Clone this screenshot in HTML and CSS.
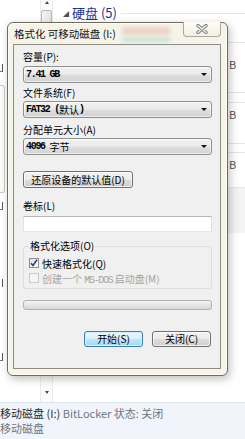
FILE: index.html
```html
<!DOCTYPE html>
<html lang="zh-CN">
  <head>
    <meta charset="UTF-8" />
    <meta name="viewport" content="width=device-width, initial-scale=1.0" />
    <title>格式化 可移动磁盘 (I:)</title>
    <link rel="stylesheet" href="styles.css">
  </head>

  <body>
    <!-- explorer window behind the dialog -->
    <div class="explorer">
      <div class="main">
        <div class="nav">
          <span class="nav-mark mark-1"></span>
          <div class="nav-box"></div>
          <span class="nav-mark mark-2"></span>
          <span class="nav-mark mark-3"></span>
          <span class="nav-mark mark-4"></span>
        </div>
        <div class="scroll">
          <span class="arrow arrow-up"></span>
          <div class="thumb"></div>
          <span class="arrow arrow-down"></span>
        </div>
        <div class="files">
          <div class="group-head">
            <span class="tri">◢</span>
            <span class="group-name">硬盘 (5)</span>
            <span class="group-line"></span>
          </div>
          <div class="tiles">
            <div class="tiles-main"></div>
            <div class="tiles-edge">
              <div class="tile tile-1"><span>B</span></div>
              <div class="tile tile-2"><span>B</span></div>
              <div class="tile tile-3"><span>B</span></div>
              <div class="tile-gray"></div>
            </div>
          </div>
        </div>
      </div>
      <div class="details">
        <div class="details-text">
          <div><span class="drive-name">移动磁盘 (I:)</span> <span class="dim">BitLocker 状态: 关闭</span></div>
          <div class="dim">移动磁盘</div>
        </div>
      </div>
    </div>

    <!-- format dialog -->
    <div class="dialog">
      <div class="title-bar">
        <span class="title">格式化 可移动磁盘 (I:)</span>
        <span class="glass"></span>
      </div>
      <div class="close-btn">
        <svg width="12" height="10" viewBox="0 0 12 10">
          <path d="M2 1.5 L10 8.5 M10 1.5 L2 8.5" stroke="#7d7d7d" stroke-width="3.4" stroke-linecap="round" fill="none" />
          <path d="M2 1.5 L10 8.5 M10 1.5 L2 8.5" stroke="#f2f2f2" stroke-width="1.5" stroke-linecap="round" fill="none" />
        </svg>
      </div>

      <div class="client">
        <div class="lbl">容量(P):</div>
        <div class="combo combo-first">
          <span class="mono">7.41 GB</span>
          <span class="caret"></span>
        </div>

        <div class="lbl lbl-fs">文件系统(F)</div>
        <div class="combo">
          <span class="mono">FAT32 (</span><span>默认</span><span class="mono">)</span>
          <span class="caret"></span>
        </div>

        <div class="lbl lbl-unit">分配单元大小(A)</div>
        <div class="combo">
          <span class="mono">4096 </span><span>字节</span>
          <span class="caret"></span>
        </div>

        <div class="btn reset">还原设备的默认值(D)</div>

        <div class="lbl lbl-volume">卷标(L)</div>
        <div class="volume-input"></div>

        <fieldset class="options">
          <legend>格式化选项(O)</legend>
          <div class="check-row">
            <span class="box">
              <svg width="8" height="8" viewBox="0 0 8 8">
                <path d="M1 4.2 L3 6.5 L7 0.8" stroke="#2c3f85" stroke-width="1.6" fill="none" />
              </svg>
            </span>
            <span>快速格式化(Q)</span>
          </div>
          <div class="check-row disabled">
            <span class="box"></span>
            <span>创建一个 <span class="mono">MS-DOS</span> 启动盘(M)</span>
          </div>
        </fieldset>

        <div class="progress"></div>

        <div class="actions">
          <div class="btn action default">开始(S)</div>
          <div class="btn action">关闭(C)</div>
        </div>
      </div>
    </div>
  </body>
</html>
```

FILE: styles.css
```css
body {
  margin: 0;
  width: 245px;
  height: 439px;
  overflow: hidden;
  position: relative;
  background-color: #ffffff;
  font-family: "Noto Sans CJK SC", "Noto Sans", sans-serif;
}

/* explorer behind */

.explorer {
  display: flex;
  flex-direction: column;
  height: 439px;
}

.main {
  flex: 1;
  display: flex;
  min-height: 0;
}

.nav {
  width: 40px;
  display: flex;
  flex-direction: column;
  overflow: hidden;
}

/* bits of nav labels peeking out left of the dialog */
.nav-mark {
  width: 3px;
  height: 8px;
  border-right: 1px solid #555;
  border-bottom: 1px solid #777;
  box-sizing: border-box;
}

.mark-1 {
  margin-top: 64px;
}

.nav-box {
  width: 4px;
  height: 106px;
  margin-top: 13px;
  border: 1px solid #c9c9c6;
  border-left: none;
  border-radius: 0 3px 3px 0;
  background-color: #fbfbf8;
}

.mark-2 {
  margin-top: 9px;
}

.mark-3 {
  margin-top: 69px;
  border-bottom: none;
}

.mark-4 {
  margin-top: 66px;
}

.scroll {
  width: 13px;
  box-sizing: border-box;
  border-left: 1px solid #ececec;
  border-right: 1px solid #ececec;
  background-color: #fcfcfc;
  display: flex;
  flex-direction: column;
  align-items: center;
}

.arrow {
  width: 0;
  height: 0;
  border-left: 2.5px solid transparent;
  border-right: 2.5px solid transparent;
}

.arrow-up {
  margin-top: 1px;
  border-bottom: 3px solid #4a4a4a;
}

.thumb {
  width: 11px;
  height: 60px;
  box-sizing: border-box;
  margin-top: 6px;
  border: 1px solid #b8b8b8;
  border-radius: 2px;
  background: linear-gradient(90deg, #f4f4f4, #e4e4e4);
}

.arrow-down {
  margin-top: auto;
  margin-bottom: 8px;
  border-top: 3px solid #4a4a4a;
}

.files {
  flex: 1;
  display: flex;
  flex-direction: column;
}

.group-head {
  height: 26px;
  display: flex;
  align-items: center;
  padding-left: 10px;
}

.tri {
  font-size: 6px;
  color: #505050;
  margin-right: 3px;
}

.group-name {
  font-size: 13px;
  line-height: 16px;
  color: #1e3287;
}

.group-line {
  flex: 1;
  height: 1px;
  margin-left: 4px;
  background-color: #e3e7ee;
}

.tiles {
  flex: 1;
  display: flex;
}

.tiles-main {
  width: 175px;
}

.tiles-edge {
  flex: 1;
  padding-top: 16px;
}

.tile {
  box-sizing: border-box;
  border-top: 1px solid #e6e6e6;
  padding: 15px 0 0 1px;
  font-size: 11px;
  line-height: 12px;
  color: #555;
}

.tile-1 {
  height: 50px;
}

.tile-2,
.tile-3 {
  padding-top: 0;
}

.tile-2::before,
.tile-3::before {
  content: "";
  display: block;
  border-top: 1px solid #e6e6e6;
  margin: 9px 0 0 -1px;
  height: 5px;
}

.tile-2 {
  height: 51px;
}

.tile-3 {
  height: 44px;
}

.tile-3::before {
  margin-top: 8px;
}

.tile-gray {
  height: 45px;
  background-color: #f3f3f3;
  border-top: 1px solid #e6e6e6;
}

.details {
  height: 37px;
  box-sizing: border-box;
  border-top: 1px solid #d9e4f1;
  background-color: #f1f5fb;
  padding-top: 3px;
  font-size: 11px;
  line-height: 15px;
  overflow: hidden;
}

.details-text {
  white-space: nowrap;
}

.drive-name {
  color: #2a2a2a;
}

.dim {
  color: #6b7683;
}

/* format dialog */

.dialog {
  position: absolute;
  left: 7px;
  top: 22px;
  width: 221px;
  height: 354px;
  box-sizing: border-box;
  border: 1px solid #6f6b5d;
  border-radius: 6px;
  background-color: #f6f4e8;
  box-shadow: 2px 3px 8px rgba(0, 0, 0, 0.25), inset 0 0 0 1px #fffdf6;
  padding: 0 6px 6px 5px;
  display: flex;
  flex-direction: column;
}

.title-bar {
  height: 21px;
  display: flex;
  align-items: center;
  padding-left: 1px;
}

.title {
  font-size: 10.5px;
  color: #111;
  white-space: nowrap;
}

.glass {
  width: 48px;
  height: 14px;
  margin-left: 6px;
  background:
    linear-gradient(rgba(214, 150, 135, 0.35), rgba(214, 150, 135, 0.35)) top / 100% 8px no-repeat,
    linear-gradient(#8fcfc6, #8fcfc6) bottom / 100% 2px no-repeat;
  filter: blur(2px);
}

.close-btn {
  position: absolute;
  right: 6px;
  top: -1px;
  width: 38px;
  height: 15px;
  box-sizing: border-box;
  border: 1px solid #aca899;
  border-top: none;
  border-radius: 0 0 4px 4px;
  background: linear-gradient(#fdfcf7, #f2f0e4);
  display: flex;
  align-items: center;
  justify-content: center;
}

.client {
  flex: 1;
  border: 1px solid #8e8c83;
  background-color: #f0f0f0;
  padding: 6px 8px 0 9px;
  display: flex;
  flex-direction: column;
  font-size: 10px;
  color: #000;
}

.lbl {
  line-height: 12px;
}

.lbl-fs {
  margin-top: 4px;
}

.lbl-unit {
  margin-top: 6px;
}

.lbl-volume {
  margin-top: 12px;
}

.mono {
  font-family: "Liberation Mono", monospace;
  font-size: 10px;
  font-weight: bold;
  letter-spacing: -1.3px;
}

.combo {
  display: flex;
  align-items: center;
  height: 17px;
  box-sizing: border-box;
  margin-top: 2px;
  border: 1px solid #8e8f8f;
  border-radius: 3px;
  padding-left: 2px;
  background: linear-gradient(#f2f2f2, #ebebeb 45%, #dddddd 55%, #d3d3d3);
  box-shadow: inset 0 0 0 1px rgba(255, 255, 255, 0.6);
  line-height: 12px;
  white-space: pre;
}

.combo-first {
  margin-top: 3px;
}

.caret {
  margin-left: auto;
  margin-right: 4px;
  border-left: 3px solid transparent;
  border-right: 3px solid transparent;
  border-top: 3px solid #111;
}

.btn {
  height: 17px;
  box-sizing: border-box;
  border: 1px solid #707070;
  border-radius: 3px;
  background: linear-gradient(#f2f2f2, #ebebeb 50%, #dddddd 51%, #cfcfcf);
  box-shadow: inset 0 0 0 1px rgba(255, 255, 255, 0.7);
  line-height: 15px;
  text-align: center;
  white-space: nowrap;
}

.reset {
  width: 110px;
  margin-top: 16px;
}

.volume-input {
  height: 16px;
  box-sizing: border-box;
  margin-top: 4px;
  border: 1px solid;
  border-color: #b5b7bd #dbdfe6 #e3e9ef #e2e3ea;
  background-color: #ffffff;
}

.options {
  margin: 8px 0 0;
  padding: 5px 0 4px 5px;
  border: 1px solid #d5dfe5;
  border-radius: 3px;
  min-width: 0;
}

.options legend {
  padding: 0 1px;
  line-height: 12px;
}

.check-row {
  display: flex;
  align-items: center;
  gap: 3px;
  height: 12px;
  white-space: nowrap;
}

.check-row + .check-row {
  margin-top: 3px;
}

.box {
  width: 10px;
  height: 10px;
  box-sizing: border-box;
  border: 1px solid #8f8f8f;
  background: linear-gradient(135deg, #dedede, #ffffff);
  display: flex;
  align-items: center;
  justify-content: center;
}

.disabled {
  color: #a3a3a3;
}

.disabled .box {
  border-color: #c9c9c9;
  background: #f5f5f5;
}

.disabled .mono {
  font-weight: normal;
}

.progress {
  height: 10px;
  box-sizing: border-box;
  margin-top: 11px;
  border: 1px solid #b2b2b2;
  border-radius: 3px;
  background: linear-gradient(#f4f4f4, #e6e6e6 50%, #d6d6d6);
}

.actions {
  display: flex;
  justify-content: flex-end;
  gap: 9px;
  margin-top: 21px;
  padding-right: 1px;
}

.action {
  width: 59px;
  height: 16px;
  line-height: 14px;
}

.action.default {
  border-color: #3c7fb1;
  background: linear-gradient(#eaf6fd, #d9f0fc 50%, #bee6fd 51%, #a7d9f5);
  box-shadow: inset 0 0 0 1px #d4eefc;
}
```
